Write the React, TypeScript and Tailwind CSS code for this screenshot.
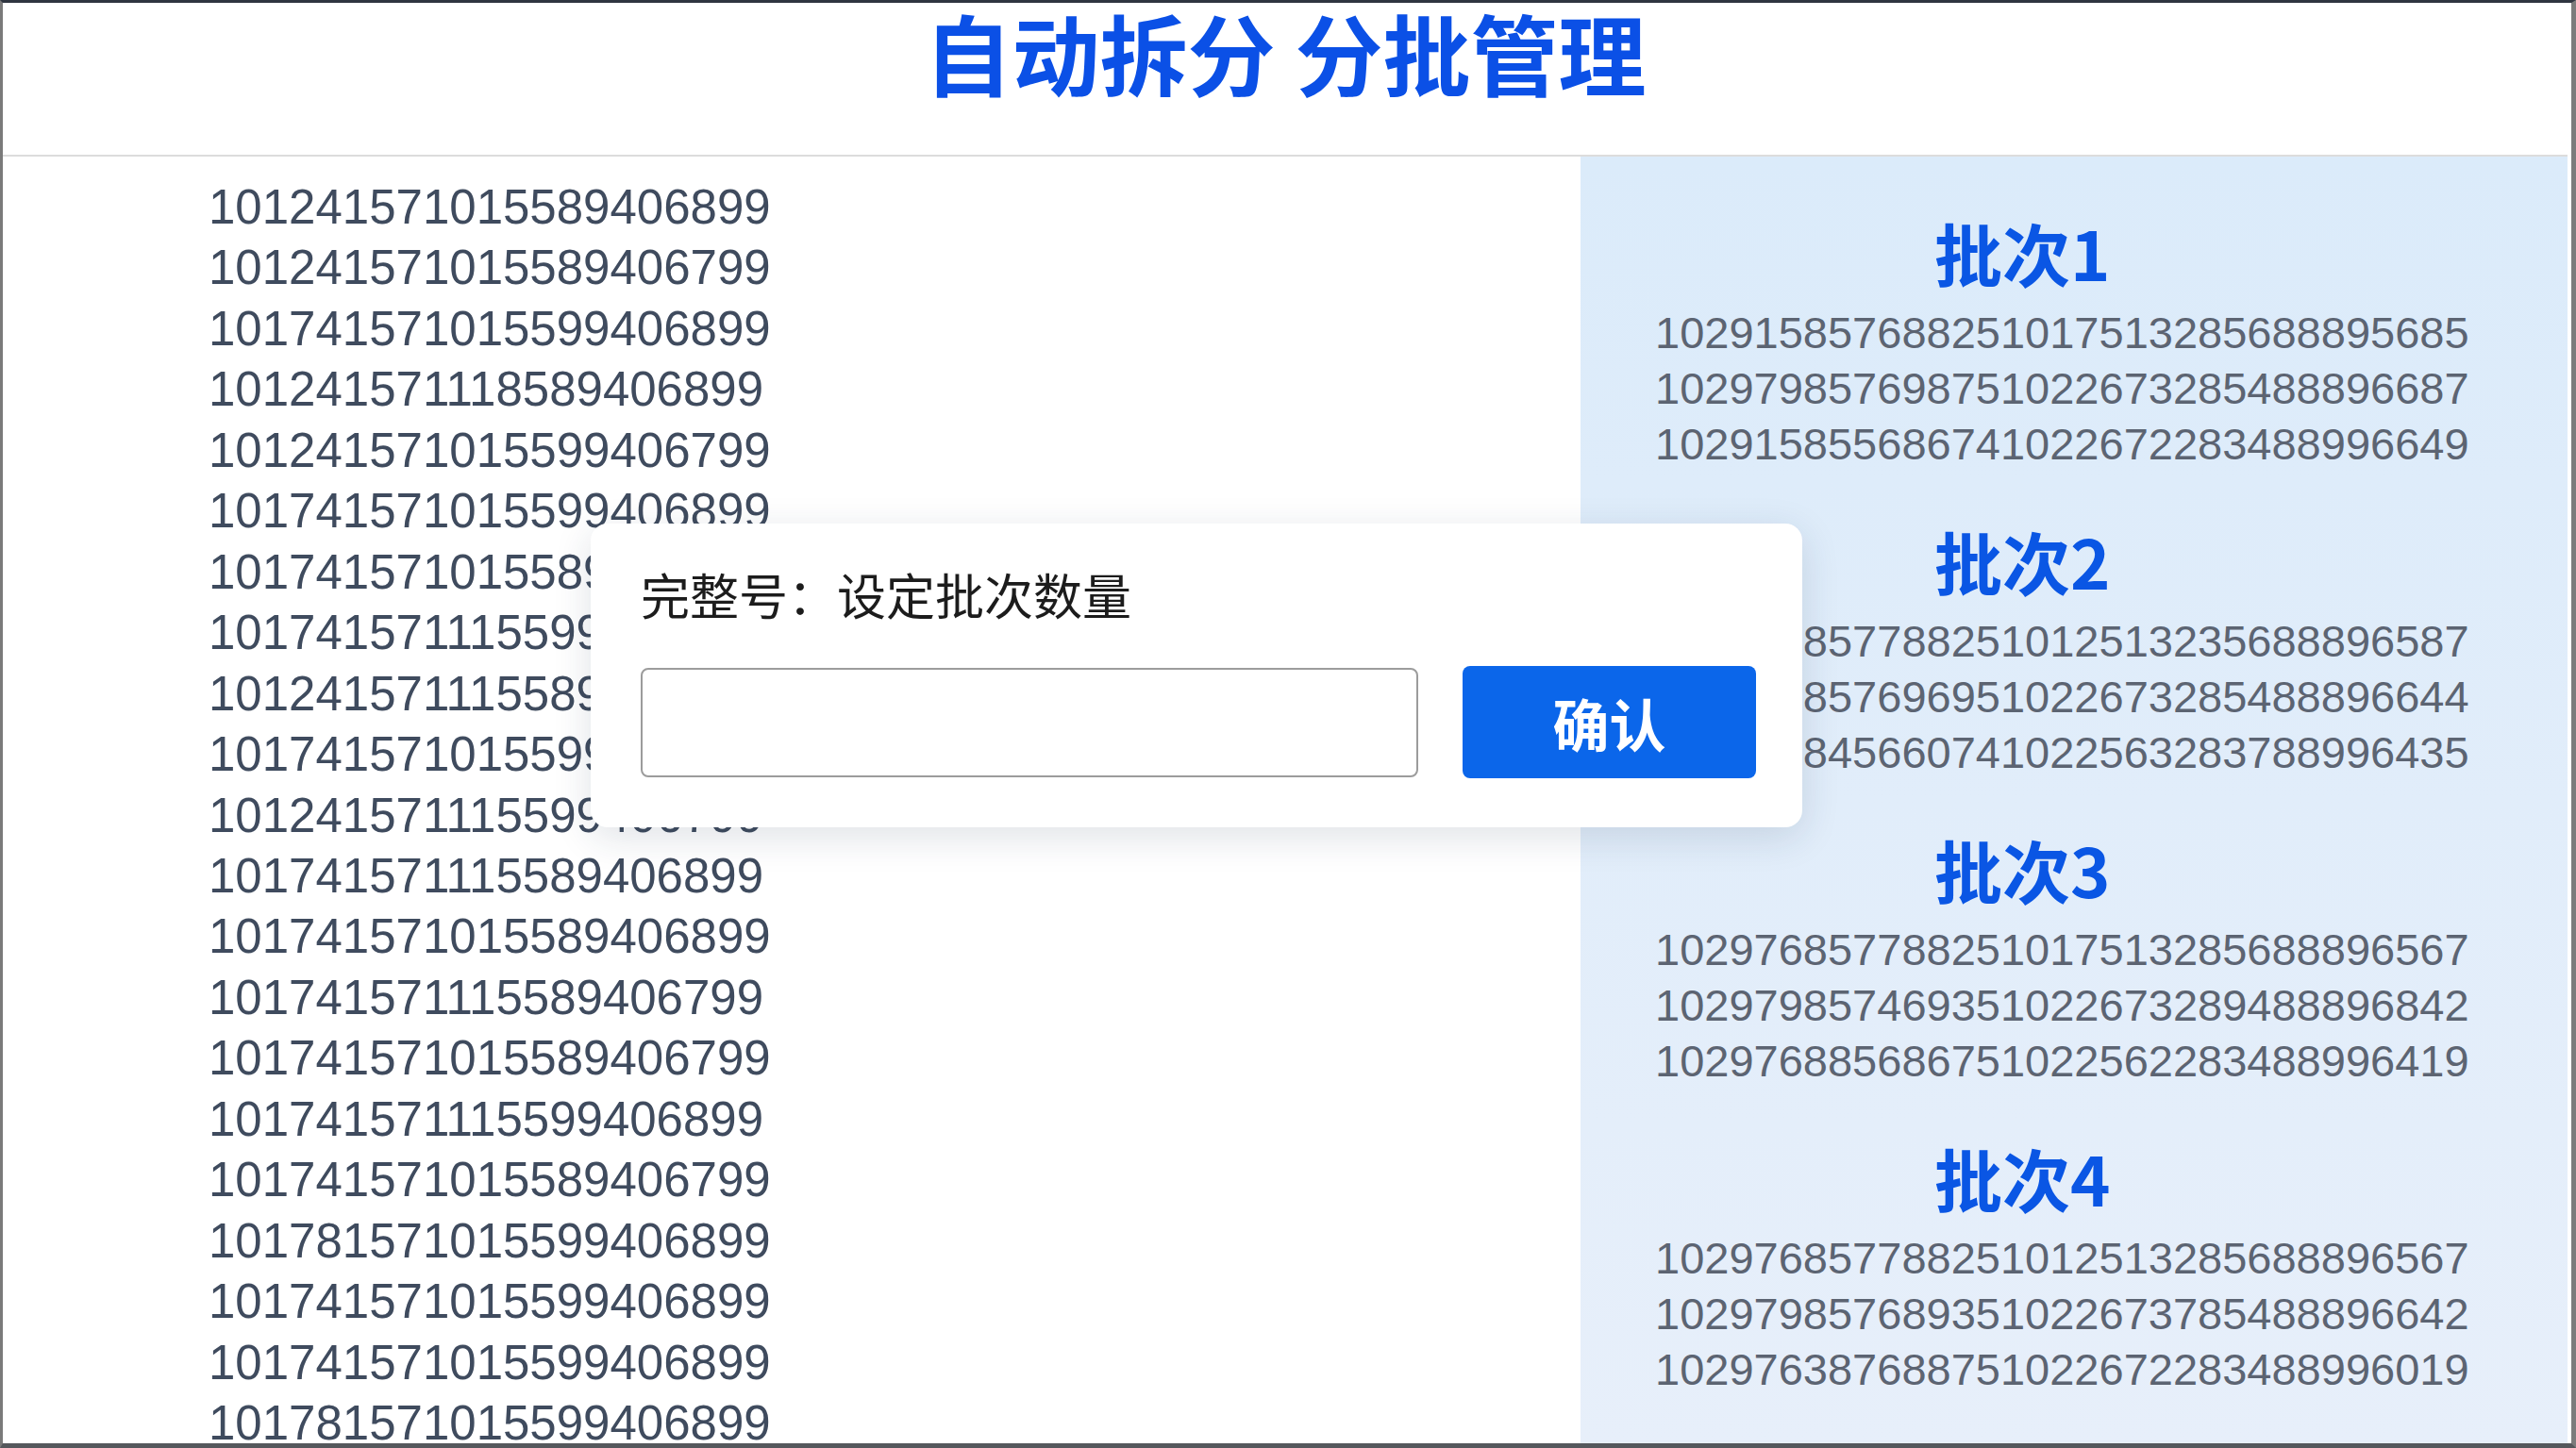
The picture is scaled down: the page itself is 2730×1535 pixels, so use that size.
import React from 'react';

const sourceCodes = [
  '101241571015589406899',
  '101241571015589406799',
  '101741571015599406899',
  '101241571118589406899',
  '101241571015599406799',
  '101741571015599406899',
  '101741571015589406899',
  '101741571115599406899',
  '101241571115589406899',
  '101741571015599406899',
  '101241571115599406799',
  '101741571115589406899',
  '101741571015589406899',
  '101741571115589406799',
  '101741571015589406799',
  '101741571115599406899',
  '101741571015589406799',
  '101781571015599406899',
  '101741571015599406899',
  '101741571015599406899',
  '101781571015599406899',
];

const batches = [
  {
    name: '批次1',
    codes: [
      '102915857688251017513285688895685',
      '102979857698751022673285488896687',
      '102915855686741022672283488996649',
    ],
  },
  {
    name: '批次2',
    codes: [
      '102976857788251012513235688896587',
      '102979857696951022673285488896644',
      '102915845660741022563283788996435',
    ],
  },
  {
    name: '批次3',
    codes: [
      '102976857788251017513285688896567',
      '102979857469351022673289488896842',
      '102976885686751022562283488996419',
    ],
  },
  {
    name: '批次4',
    codes: [
      '102976857788251012513285688896567',
      '102979857689351022673785488896642',
      '102976387688751022672283488996019',
    ],
  },
];

const cjk = 'font-["Noto_Sans_CJK_SC","Noto_Sans",sans-serif]';
const digits = 'font-["Liberation_Sans",Arial,sans-serif]';

export default function App() {
  return (
    <div className="relative w-[2730px] h-[1535px] overflow-hidden bg-white border-l-[3px] border-t-[3px] border-r-[5px] border-b-[5px] border-l-[#7a7a7a] border-t-[#2f3540] border-r-[#7c7c7c] border-b-[#55585c] pr-[4px] flex flex-col">
      {/* Header */}
      <header className="h-[163px] shrink-0 border-b-2 border-[#dcdcdc] flex justify-center">
        <h1
          className={`${cjk} text-[93px] leading-[104px] font-bold text-[#0b50e6]`}
        >
          自动拆分 分批管理
        </h1>
      </header>

      {/* Body */}
      <div className="flex flex-1 min-h-0">
        {/* Source list */}
        <div className="w-[1672px] shrink-0 overflow-hidden pl-[218px] pt-[22px] bg-white">
          {sourceCodes.map((code, i) => (
            <div
              key={i}
              className={`${digits} text-[51px] leading-[64.45px] text-[#3f4b5e]`}
            >
              {code}
            </div>
          ))}
        </div>

        {/* Batches */}
        <div className="flex-1 overflow-hidden bg-gradient-to-b from-[#dbebfa] to-[#e7effa] pl-[79px] pt-[53px] flex flex-col gap-[46px]">
          {batches.map((b) => (
            <div key={b.name} className="flex flex-col items-start">
              <div
                className={`${cjk} ml-[296px] mb-2 text-[72px] leading-[96px] font-bold text-[#0a56e4]`}
              >
                {b.name}
              </div>
              {b.codes.map((c) => (
                <div
                  key={c}
                  className={`${digits} text-[47px] leading-[59px] text-[#5c6472]`}
                >
                  {c}
                </div>
              ))}
            </div>
          ))}
        </div>
      </div>

      {/* Dialog */}
      <div className="absolute left-[623px] top-[552px] w-[1284px] h-[322px] bg-white rounded-[18px] shadow-[0_10px_40px_rgba(30,50,80,0.14)] pl-[53px] pr-[49px] pt-[43px]">
        <div className={`${cjk} text-[52px] leading-[64px] text-[#1c1c1c]`}>
          完整号：设定批次数量
        </div>
        <div className="mt-[44px] flex items-center gap-[47px]">
          <input
            type="text"
            className="w-[824px] h-[116px] border-2 border-[#9c9c9c] rounded-[8px] bg-white outline-none px-4 text-[44px]"
          />
          <button
            className={`${cjk} w-[311px] h-[119px] rounded-[8px] bg-[#0b66ea] text-white text-[60px] font-semibold flex items-center justify-center`}
          >
            确认
          </button>
        </div>
      </div>
    </div>
  );
}
